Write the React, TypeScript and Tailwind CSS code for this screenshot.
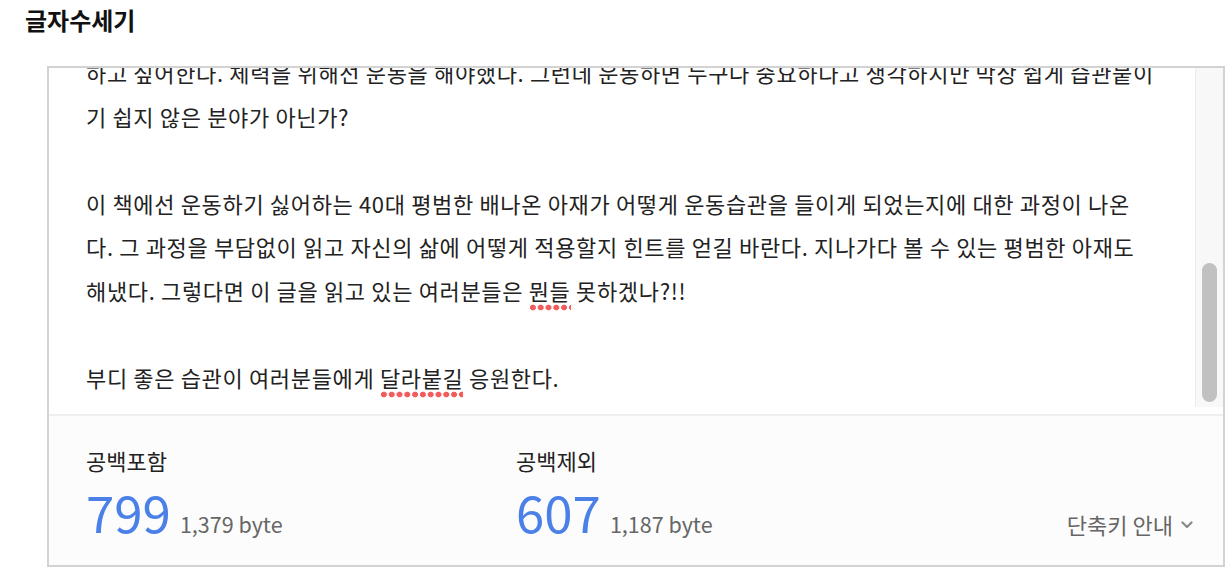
import React from 'react';

const lines = [
  '하고 싶어한다. 체력을 위해선 운동을 해야했다. 그런데 운동하면 누구나 중요하다고 생각하지만 막상 쉽게 습관붙이',
  '기 쉽지 않은 분야가 아닌가?',
  '',
  '이 책에선 운동하기 싫어하는 40대 평범한 배나온 아재가 어떻게 운동습관을 들이게 되었는지에 대한 과정이 나온',
  '다. 그 과정을 부담없이 읽고 자신의 삶에 어떻게 적용할지 힌트를 얻길 바란다. 지나가다 볼 수 있는 평범한 아재도',
];

// spellcheck-style red dots under a word
function Typo({ children }: { children: React.ReactNode }) {
  return (
    <span className="pb-[5px] bg-[radial-gradient(circle,#f25c5c_2.6px,transparent_3.2px)] bg-[length:7.8px_7px] bg-repeat-x bg-[position:0_100%]">
      {children}
    </span>
  );
}

function Count({ label, value, bytes }: { label: string; value: string; bytes: string }) {
  return (
    <div className="w-[430px] flex flex-col">
      <div className="text-[22px] leading-[30px] text-[#222]">{label}</div>
      <div className="flex items-baseline gap-[9px] mt-[8px]">
        <span className="text-[51px] leading-[56px] text-[#4a80e8]">{value}</span>
        <span className="text-[21.5px] text-[#666]">{bytes}</span>
      </div>
    </div>
  );
}

export default function App() {
  return (
    <div className="w-[1230px] h-[580px] bg-white overflow-hidden" style={{ fontFamily: '"Noto Sans CJK KR", "Noto Sans", sans-serif' }}>
      <h1 className="pl-[25px] pt-[4px] text-[24px] leading-[32px] font-bold text-[#111]">글자수세기</h1>

      <div className="ml-[47px] mt-[30px] w-[1178px] border-2 border-[#d3d3d3] flex flex-col">
        <div className="flex h-[339px]">
          <div className="flex-1 overflow-hidden pl-[37px]">
            <div className="-mt-[17px] text-[22px] tracking-[0.65px] leading-[43.5px] text-[#222] whitespace-nowrap">
              {lines.map((l, i) => (
                <div key={i}>{l || '\u00a0'}</div>
              ))}
              <div>
                해냈다. 그렇다면 이 글을 읽고 있는 여러분들은 <Typo>뭔들</Typo> 못하겠나?!!
              </div>
              <div>{'\u00a0'}</div>
              <div>
                부디 좋은 습관이 여러분들에게 <Typo>달라붙길</Typo> 응원한다.
              </div>
            </div>
          </div>
          <div className="w-[28px] bg-[#f8f8f8] border-l border-[#ececec] flex flex-col pt-[195px] items-center">
            <div className="w-[15px] h-[139px] rounded-full bg-[#c1c1c1]" />
          </div>
        </div>
        <div className="h-[7px]" />
        <div className="border-t-2 border-[#eeeeee] bg-[#fcfcfc] h-[151px] flex items-start pl-[37px] pr-[30px] pt-[29px]">
          <Count label="공백포함" value="799" bytes="1,379 byte" />
          <Count label="공백제외" value="607" bytes="1,187 byte" />
          <div className="ml-auto self-end mb-[24px] flex items-center gap-[8px] text-[22px] text-[#666]">
            <span>단축키 안내</span>
            <svg width="12" height="8" viewBox="0 0 12 8" fill="none">
              <path d="M1.5 1.5l4.5 4.5 4.5-4.5" stroke="#8a8a8a" strokeWidth="2.2" strokeLinecap="round" strokeLinejoin="round" />
            </svg>
          </div>
        </div>
      </div>
    </div>
  );
}
